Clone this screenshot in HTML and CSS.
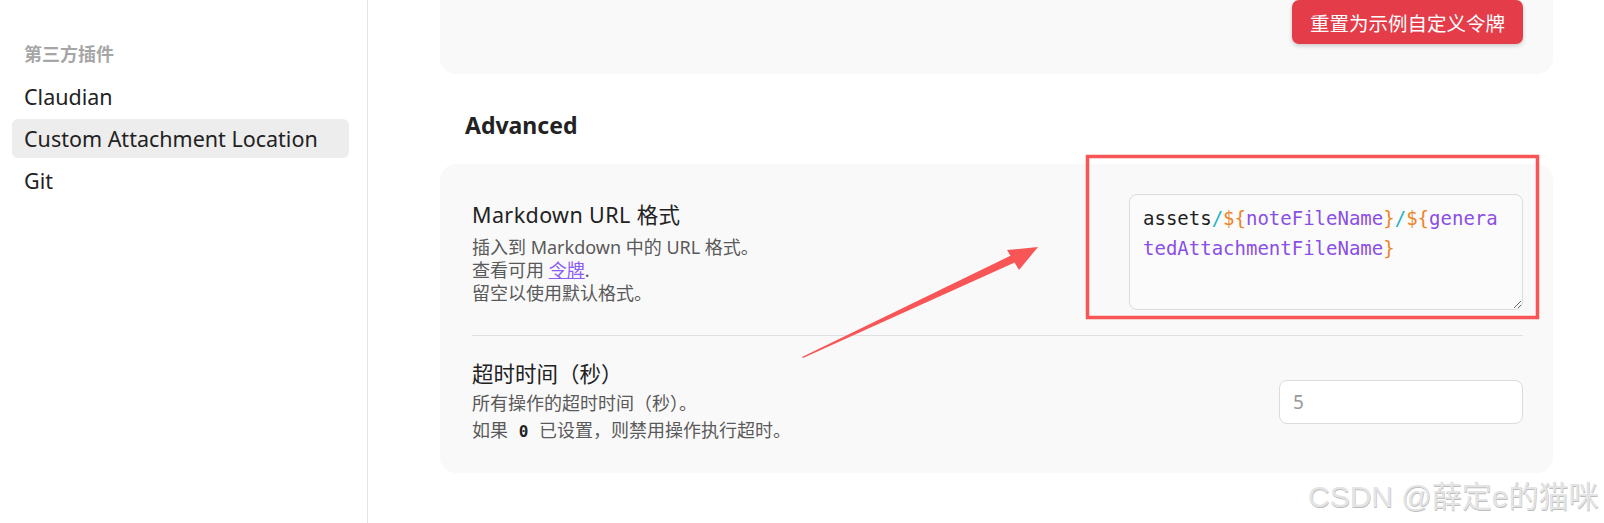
FILE: index.html
```html
<!DOCTYPE html>
<html lang="zh-CN">
<head>
    <meta charset="UTF-8">
    <title>Custom Attachment Location</title>
    <link rel="stylesheet" href="styles.css">
</head>
<body>
    <aside class="sidebar">
        <div class="nav-heading">第三方插件</div>
        <div class="nav-item">Claudian</div>
        <div class="nav-item active">Custom Attachment Location</div>
        <div class="nav-item">Git</div>
    </aside>

    <main class="content">
        <section class="card top-card">
            <button class="btn-danger">重置为示例自定义令牌</button>
        </section>

        <h3 class="section-title">Advanced</h3>

        <section class="card">
            <div class="setting-item first">
                <div class="setting-info">
                    <div class="setting-name">Markdown URL 格式</div>
                    <div class="setting-desc">
                        插入到 Markdown 中的 URL 格式。<br>
                        查看可用 <a href="#" class="token-link">令牌</a>.<br>
                        留空以使用默认格式。
                    </div>
                </div>
                <div class="code-input"><span class="t-text">assets</span><span class="t-sep">/</span><span class="t-brace">${</span><span class="t-var">noteFileName</span><span class="t-brace">}</span><span class="t-sep">/</span><span class="t-brace">${</span><span class="t-var">generatedAttachmentFileName</span><span class="t-brace">}</span></div>
            </div>
            <div class="setting-item">
                <div class="setting-info">
                    <div class="setting-name">超时时间（秒）</div>
                    <div class="setting-desc">
                        所有操作的超时时间（秒）。<br>
                        如果 <code>0</code> 已设置，则禁用操作执行超时。
                    </div>
                </div>
                <input type="text" class="text-input" placeholder="5">
            </div>
        </section>
    </main>

    <!-- screenshot annotation -->
    <svg class="annotation" width="1604" height="523" viewBox="0 0 1604 523">
        <rect x="1087.5" y="156.5" width="450" height="161" fill="none" stroke="#f85656" stroke-width="3.5"/>
        <polygon points="802,357 1014,254 1018,261 803,358" fill="#f85656"/>
        <polygon points="1038,247 1007,250 1019,270" fill="#f85656"/>
    </svg>

    <div class="watermark">CSDN @薛定e的猫咪</div>
</body>
</html>
```

FILE: styles.css
```css
body {
    margin: 0;
    height: 523px;
    overflow: hidden;
    display: flex;
    background-color: #ffffff;
    color: #222222;
    font-family: 'Noto Sans', 'Noto Sans CJK SC', sans-serif;
    position: relative;
}

.sidebar {
    width: 368px;
    border-right: 1px solid #e3e3e3;
    padding: 40px 18px 0 12px;
    box-sizing: border-box;
    flex-shrink: 0;
}

.nav-heading {
    font-size: 18px;
    font-weight: bold;
    color: #a6a6a6;
    padding-left: 12px;
    height: 30px;
    line-height: 28px;
    margin-bottom: 7px;
}

.nav-item {
    font-size: 21.5px;
    height: 39px;
    line-height: 40px;
    padding-left: 12px;
    margin-bottom: 3px;
    border-radius: 6px;
}

.nav-item.active {
    background-color: #ededed;
}

.content {
    flex: 1;
    padding: 0 51px 0 72px;
}

.card {
    background-color: #f9f9f9;
    border-radius: 16px;
}

.top-card {
    margin-top: -30px;
    padding: 30px;
    display: flex;
    justify-content: flex-end;
}

.btn-danger {
    height: 44px;
    padding: 0 18px;
    border: none;
    border-radius: 7px;
    background-color: #e53c4a;
    color: #ffffff;
    font-family: 'Noto Sans CJK SC', sans-serif;
    font-size: 19.5px;
    box-shadow: 0 2px 4px rgba(0, 0, 0, 0.18);
}

.section-title {
    font-size: 23px;
    font-weight: bold;
    line-height: 30px;
    margin: 36px 0 24px 25px;
}

.card .setting-item {
    display: flex;
    align-items: center;
    justify-content: space-between;
    margin: 0 30px 0 32px;
}

.setting-item.first {
    padding: 30px 0 25px;
    border-bottom: 1px solid #e0e0e0;
}

.setting-item + .setting-item {
    padding: 23px 0 28px;
}

.setting-name {
    font-size: 21.5px;
    line-height: 30px;
    margin-bottom: 6px;
    letter-spacing: 0.4px;
}

.setting-desc {
    font-size: 18px;
    line-height: 23px;
    color: #5a5a5a;
}

.setting-item + .setting-item .setting-name {
    margin-bottom: 1px;
    letter-spacing: 0;
}

.setting-item + .setting-item .setting-desc {
    line-height: 27px;
}

.token-link {
    color: #8a5cf5;
}

code {
    font-family: 'DejaVu Sans Mono', monospace;
    font-weight: bold;
    font-size: 16px;
    color: #222222;
    padding: 0 6px;
}

.code-input {
    width: 394px;
    height: 116px;
    box-sizing: border-box;
    padding: 8px 14px 8px 13px;
    border: 1px solid #dcdcdc;
    border-radius: 8px;
    background-color: #fbfbfb;
    font-family: 'DejaVu Sans Mono', monospace;
    font-size: 19px;
    line-height: 30px;
    word-break: break-all;
    resize: both;
    overflow: hidden;
}

.t-text { color: #1f1f1f; }
.t-sep { color: #1fb5c4; }
.t-brace { color: #ee8428; }
.t-var { color: #8a4fe6; }

.text-input {
    width: 244px;
    height: 44px;
    box-sizing: border-box;
    padding: 0 13px;
    border: 1px solid #dcdcdc;
    border-radius: 8px;
    background-color: #ffffff;
    font-family: 'Noto Sans', sans-serif;
    font-size: 19px;
}

.text-input::placeholder {
    color: #9a9a9a;
}

.annotation {
    position: absolute;
    left: 0;
    top: 0;
    pointer-events: none;
}

.watermark {
    position: absolute;
    left: 1308px;
    top: 482px;
    font-family: 'Liberation Sans', 'Noto Sans CJK SC', sans-serif;
    font-size: 30px;
    line-height: 30px;
    color: #e4e4e4;
    text-shadow: 0.5px 0.5px 0 #bdbdbd;
    white-space: nowrap;
}
```
